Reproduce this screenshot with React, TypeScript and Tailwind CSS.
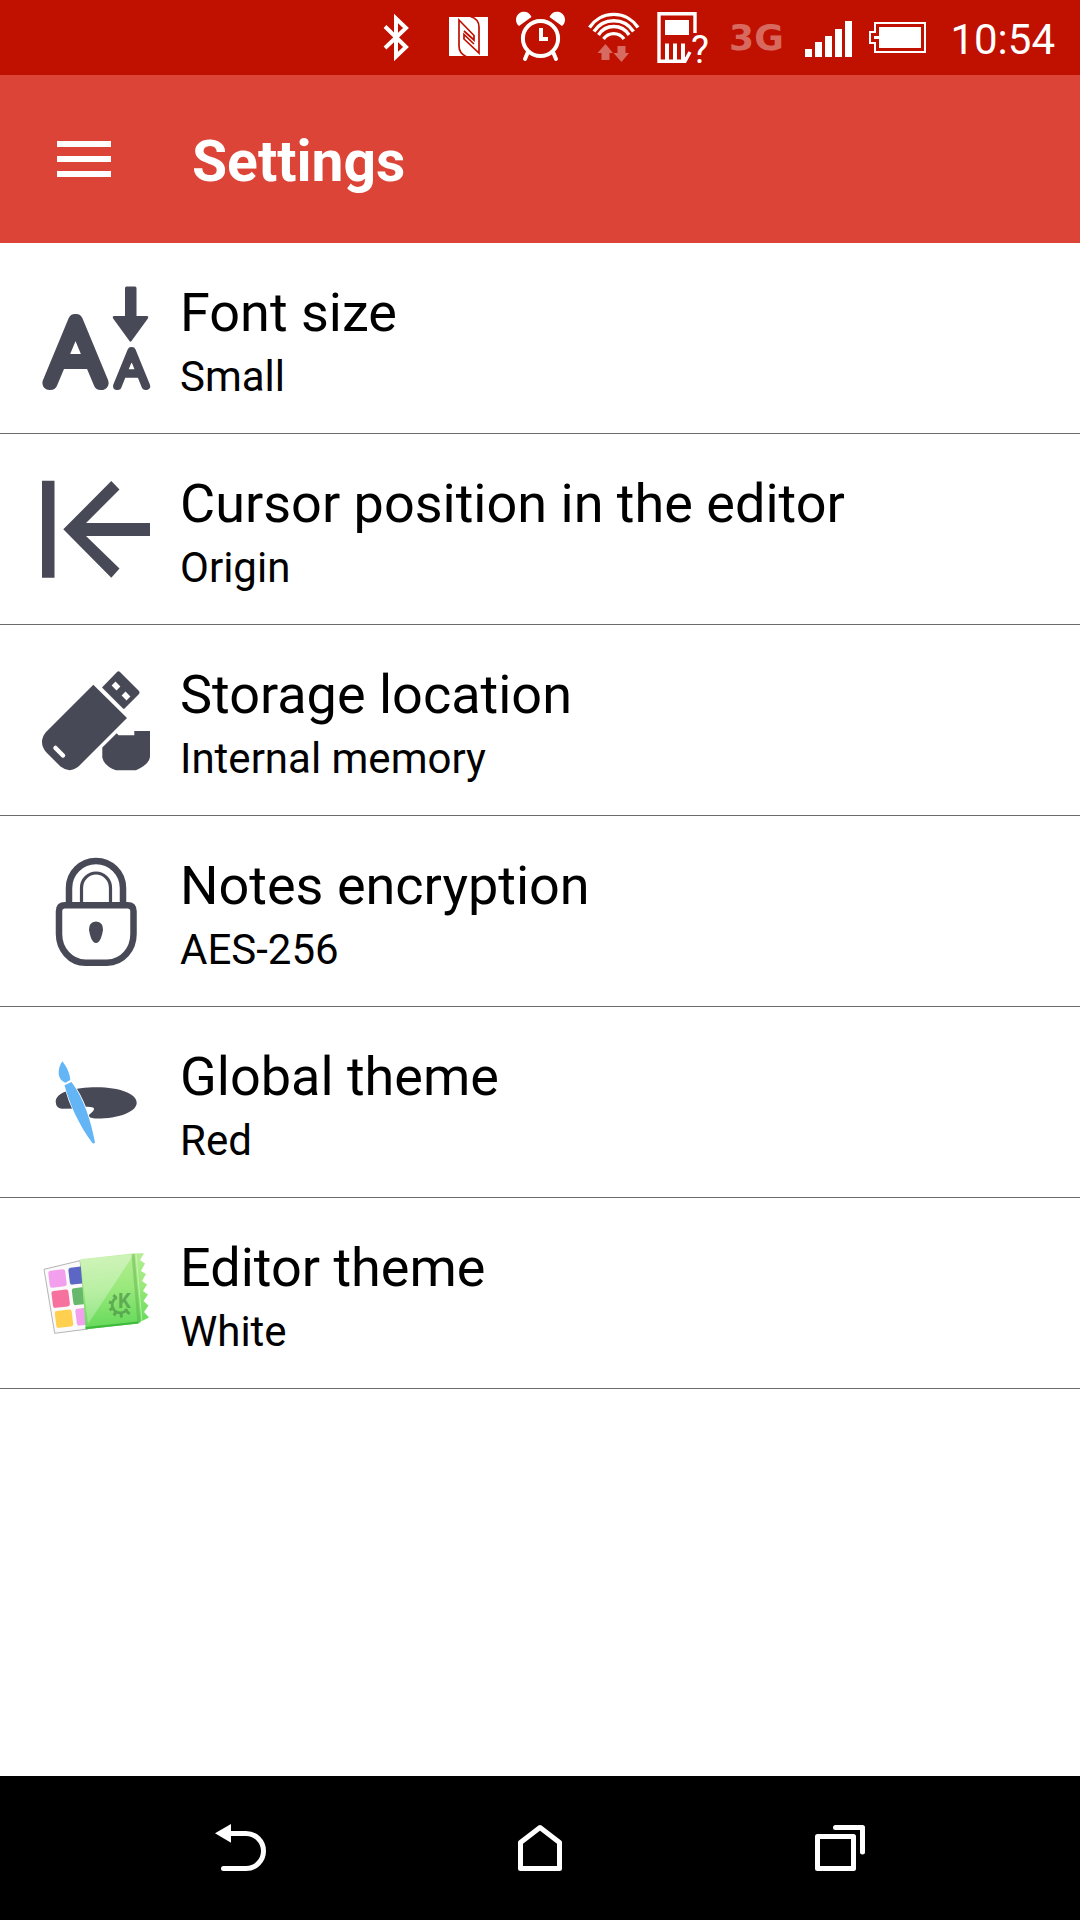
import type { ReactNode } from 'react';

interface Setting {
  title: string;
  value: string;
  icon: ReactNode;
}

function StatusIcon({ label, children }: { label: string; children: ReactNode }) {
  return (
    <svg role="img" aria-label={label} viewBox="0 0 72 75" className="h-[75px] w-[72px] shrink-0">
      {children}
    </svg>
  );
}

function StatusBar() {
  return (
    <div className="flex h-[75px] items-center justify-end bg-[#bf1000] pr-[25px] text-white">
      <StatusIcon label="Bluetooth">
        <path d="M25 26.5 46 47 36 56.5V18.5L46 28 25 48" fill="none" stroke="currentColor" strokeWidth="4" />
      </StatusIcon>
      <StatusIcon label="NFC">
        <rect x="17" y="17" width="39" height="39" fill="currentColor" />
        <path
          d="M34 56.500Q27 53 27 46V20L42 35.500V40L32 31M38.500 16.500Q47 19 47 27V53L32 39V34.500L42 44"
          fill="none"
          stroke="#bf1000"
          strokeWidth="1.7"
        />
      </StatusIcon>
      <StatusIcon label="Alarm">
        <g fill="none" stroke="currentColor" strokeWidth="4">
          <circle cx="36.5" cy="38.5" r="17.6" />
          <path d="M37 28V39H44" />
          <path d="M23.5 53 21 59M49.5 53 52 59" strokeLinecap="round" />
        </g>
        <path d="M15 26A8 8 0 1 1 27.5 17ZM58 26A8 8 0 1 0 45.500 17Z" fill="currentColor" />
      </StatusIcon>
      <StatusIcon label="Wi-Fi">
        <path
          d="M13.500 27.500A29 29 0 0 1 62 27.500M18 31.500A23.500 23.500 0 0 1 57.500 31.500M22.500 35A18 18 0 0 1 53 35M27.500 39A12.500 12.500 0 0 1 48 39"
          fill="none"
          stroke="currentColor"
          strokeWidth="3.4"
        />
        <path
          d="M29.500 44 37 53H33.500V60H25.500V53H21.500ZM45.500 62 37.500 53H41.500V46H49.500V53H53Z"
          fill="currentColor"
          opacity=".38"
        />
      </StatusIcon>
      <StatusIcon label="Unknown SIM">
        <path d="M47 33V13.700H11V61.300H37L42 52" fill="none" stroke="currentColor" strokeWidth="3.4" />
        <path d="M17 20H41V35H17ZM17 43.500H21V60H17ZM25 43.500H29V60H25ZM33 43.500H37V60H33Z" fill="currentColor" />
        <text x="52" y="63" textAnchor="middle" className="fill-white font-[Roboto] text-[38px]">
          ?
        </text>
      </StatusIcon>
      <span className="w-[72px] text-center font-['DejaVu_Sans'] text-[36px] leading-[76px] font-bold text-white/40">
        3G
      </span>
      <StatusIcon label="Signal">
        <path d="M13 49H20V57H13ZM23 42H30V57H23ZM33 36H40V57H33ZM43 29H50V57H43ZM53 21H60V57H53Z" fill="currentColor" />
      </StatusIcon>
      <StatusIcon label="Battery">
        <path d="M11 23H61V52H11V43H6V32H11Z" fill="none" stroke="currentColor" strokeWidth="2" />
        <path d="M15 27H57V48H15V39H10V36H15Z" fill="currentColor" />
      </StatusIcon>
      <time className="pt-1 pl-3.5 text-[42px] leading-[64px]">10:54</time>
    </div>
  );
}

function FontSizeIcon() {
  return (
    <>
      <g className="fill-[#474956] stroke-[#474956] font-[Lato] font-thin" strokeLinejoin="round" textAnchor="middle">
        <text x="33.500" y="98" strokeWidth="14" className="text-[88px]">
          A
        </text>
        <text x="89.500" y="101" strokeWidth="8" className="text-[49px]">
          A
        </text>
      </g>
      <path
        d="M83 3Q83 1.500 84.500 1.500H93Q94.500 1.500 94.500 3V31H104.500Q107.500 31 105.500 34L89.500 56Q88.500 57.500 87.500 56L71.500 34Q69.500 31 72.500 31H83Z"
        fill="#474956"
      />
    </>
  );
}

function CursorIcon() {
  return (
    <path
      d="M0 4.700H12.500V101.700H0ZM21.300 53.300 69.300 5 77.500 13.500 44 47H108V60H44L77.500 92.500 69.300 101.700Z"
      fill="#474956"
    />
  );
}

function StorageIcon() {
  return (
    <>
      <path
        d="M51.300 17.700 85 51 37 99Q28 107 18.500 99.500L4 85Q-4 75 4 65ZM75 5Q76.500 3.500 78 5L97 24Q98 25.500 97 27L83 41Q82 42.500 81 41.500L60 20.500ZM60.300 80.500 74.700 66.300 76.500 68.300H92.300V64H108V89Q108 97 94 103.300H74Q62 99 60.300 90.500Z"
        fill="#474956"
      />
      <path d="M13.500 81 21 88.500" stroke="#fff" strokeWidth="4.500" strokeLinecap="round" />
      <path d="M73.500 18.500 74.500 19.500M83.500 28.500 84.500 29.500" stroke="#fff" strokeWidth="5.500" strokeLinecap="square" />
    </>
  );
}

function LockIcon() {
  return (
    <>
      <g fill="none" stroke="#474956">
        <path d="M27 45V30A27 27 0 0 1 81 30V45" strokeWidth="6.500" />
        <path d="M39.500 45V30A14.500 15 0 0 1 68.500 30V45" strokeWidth="3.200" />
        <path
          d="M23 47.300H85.500Q91.500 47.300 91.500 53.300V76C91.500 91 81 104.700 65 104.700H43.500C28 104.700 17 91 17 76V53.300Q17 47.300 23 47.300Z"
          strokeWidth="6.500"
        />
      </g>
      <path d="M54 63.500Q61.500 64 61 72 59.500 81 56.500 84 54 86 51.500 84 48.500 81 47 72 46.500 64 54 63.500Z" fill="#474956" />
    </>
  );
}

function PaletteIcon() {
  return (
    <>
      <path
        d="M13.700 52.700C14 43 32 38.300 54.700 38.300 78 38.300 94.700 45 94.700 53.700 94.700 63 76 69.500 55 69.500 50 69.500 44 68 48 65 52 61.500 53 60 51 58.500 47 57 41 57.500 36 59.500L19.700 59.700Q14 59 13.700 52.700Z"
        fill="#474956"
      />
      <path
        d="M20.300 12.300C25 18 28 25 28.300 31Q26 32 23.500 33.700C15 31 15 20 20.300 12.300ZM22.500 36.300 29.500 33C42 50 49 72 53 93.500Q51.500 95.500 50 93.500C37 76 28 56 22.500 36.300Z"
        fill="#64b5f6"
        stroke="#fff"
        strokeWidth="1.600"
        paintOrder="stroke"
      />
    </>
  );
}

function EditorThemeIcon() {
  return (
    <>
      <defs>
        <linearGradient id="packet" x1="0" y1="0" x2="0.100" y2="1">
          <stop offset="0" stopColor="#b9ee96" />
          <stop offset=".5" stopColor="#9be97c" />
          <stop offset="1" stopColor="#66da5b" />
        </linearGradient>
        <linearGradient id="shine" x1="0" y1="0" x2="0" y2="1">
          <stop offset="0" stopColor="#fff" stopOpacity=".35" />
          <stop offset="1" stopColor="#fff" stopOpacity=".25" />
        </linearGradient>
      </defs>
      <path d="M2 29.300 38 20.700 46 89 12.700 93.300Z" fill="#fafafa" stroke="#b4b4b4" strokeWidth="1" />
      <rect x="7" y="30" width="17" height="17" rx="2.500" fill="#f2a0ee" transform="rotate(-7 15.500 38.500)" />
      <rect x="27" y="27" width="17" height="17" rx="2.500" fill="#5c66c4" transform="rotate(-7 35 35)" />
      <rect x="10.200" y="50.200" width="17" height="17" rx="2.500" fill="#f7719f" transform="rotate(-7 18.700 58.700)" />
      <rect x="30.500" y="47.500" width="17" height="17" rx="2.500" fill="#67b86c" transform="rotate(-7 38.500 55.500)" />
      <rect x="13.500" y="70.200" width="17" height="17" rx="2.500" fill="#ffd04f" transform="rotate(-7 22 78.700)" />
      <rect x="34" y="68" width="17" height="17" rx="2.500" fill="#f2a0ee" transform="rotate(-7 42 76)" />
      <path
        d="M38.300 19.300 91 13.500 102 13.300 98 20 103 23.500 99 31 104 34 100 41 105 44.500 101 51 106 54.500 101.500 61 106.500 65.500 102 72 107 77.500 97 82.500 96 83.500 43.700 89.300Z"
        fill="url(#packet)"
      />
      <path d="M38.300 19.300 92 14 46 84Z" fill="url(#shine)" />
      <path d="M91 14 97 83" stroke="#55a846" strokeWidth="3" opacity=".4" />
      <path d="M94 14 100 82" stroke="#d6ffc2" strokeWidth="1" opacity=".6" />
      <path d="M43.500 87 96.500 81.500V83.500L43.700 89.300Z" fill="#3fba3c" />
      <g opacity=".75">
        <path d="M75 57.500A8 8 0 1 0 85 69" fill="none" stroke="#51994a" strokeWidth="2.500" />
        <path
          d="M74 58 71.500 55M71 63 67 62M71 68 67.500 70M74 71.500 72 75.500M79 73 79.500 77.500M84 70.500 87.500 74"
          stroke="#51994a"
          strokeWidth="3"
        />
        <text x="76" y="68" className="fill-[#51994a] font-[Roboto] text-[20px] font-bold">
          K
        </text>
      </g>
    </>
  );
}

const settings: Setting[] = [
  { title: 'Font size', value: 'Small', icon: <FontSizeIcon /> },
  { title: 'Cursor position in the editor', value: 'Origin', icon: <CursorIcon /> },
  { title: 'Storage location', value: 'Internal memory', icon: <StorageIcon /> },
  { title: 'Notes encryption', value: 'AES-256', icon: <LockIcon /> },
  { title: 'Global theme', value: 'Red', icon: <PaletteIcon /> },
  { title: 'Editor theme', value: 'White', icon: <EditorThemeIcon /> },
];

function SettingRow({ title, value, icon }: Setting) {
  return (
    <li className="border-b border-[#6b6b6b]">
      <button className="flex w-full items-start gap-[30px] px-[42px] pt-[42px] pb-8 text-left text-black">
        <svg viewBox="0 0 108 108" className="size-[108px] shrink-0 overflow-visible" aria-hidden="true">
          {icon}
        </svg>
        <span className="flex flex-col gap-3">
          <span className="text-[54px] leading-[56px]">{title}</span>
          <span className="text-[42px] leading-[48px]">{value}</span>
        </span>
      </button>
    </li>
  );
}

function NavButton({ label, children }: { label: string; children: ReactNode }) {
  return (
    <button aria-label={label} className="flex h-full items-center justify-center">
      <svg
        viewBox="0 0 60 60"
        className="size-[60px]"
        fill="none"
        stroke="currentColor"
        strokeWidth="5"
        strokeLinecap="round"
        strokeLinejoin="round"
      >
        {children}
      </svg>
    </button>
  );
}

export default function App() {
  return (
    <div className="flex min-h-screen flex-col bg-white font-[Roboto,sans-serif]">
      <StatusBar />

      {/* App bar */}
      <header className="flex h-[168px] items-center gap-[81px] bg-[#db4437] px-[57px] text-white">
        <button aria-label="Menu" className="flex w-[54px] flex-col gap-[9px]">
          <span className="h-1.5 bg-white" />
          <span className="h-1.5 bg-white" />
          <span className="h-1.5 bg-white" />
        </button>
        <h1 className="pt-1.5 text-[57px] leading-[64px] font-bold">Settings</h1>
      </header>

      <main className="flex-1">
        <ul>
          {settings.map((s) => (
            <SettingRow key={s.title} {...s} />
          ))}
        </ul>
      </main>

      {/* System navigation */}
      <nav className="grid h-36 grid-cols-3 bg-black px-[90px] text-white">
        <NavButton label="Back">
          <path d="M18 15.500H36A17.500 17.500 0 0 1 36 50.500H13.500" />
          <path d="M5 15.300 21 6V24.700Z" fill="currentColor" stroke="none" />
        </NavButton>
        <NavButton label="Home">
          <path d="M30 9.500 49.500 24.500V50.500H10.500V24.500Z" />
        </NavButton>
        <NavButton label="Recent apps">
          <path d="M7.500 18.500H43.500V50.500H7.500ZM25.500 9.500H52.500V34" />
        </NavButton>
      </nav>
    </div>
  );
}
